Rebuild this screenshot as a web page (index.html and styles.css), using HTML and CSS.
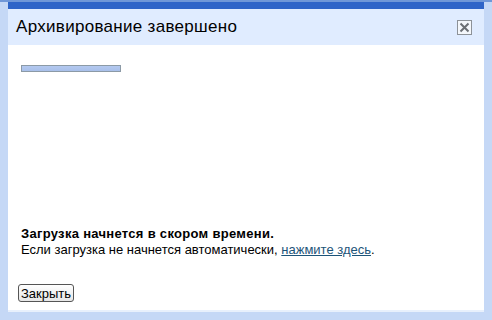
FILE: index.html
```html
<!DOCTYPE html>
<html lang="ru">
  <head>
    <meta charset="UTF-8" />
    <title>Архивирование завершено</title>
    <link rel="stylesheet" href="styles.css">
  </head>
  <body>
    <div class="page-strip"></div>
    <div class="frame">
      <div class="dialog">
        <div class="dialog-head">
          <h1>Архивирование завершено</h1>
          <span class="close-btn">
            <svg width="11" height="11" viewBox="0 0 11 11">
              <path d="M1.5 1.5 L9.5 9.5 M9.5 1.5 L1.5 9.5" stroke="#6b6f74" stroke-width="2" />
            </svg>
          </span>
        </div>
        <div class="dialog-body">
          <div class="progress"><div class="progress-fill"></div></div>
          <div class="message">
            <p class="msg-title">Загрузка начнется в скором времени.</p>
            <p>Если загрузка не начнется автоматически, <a href="#">нажмите здесь</a>.</p>
          </div>
          <button class="btn">Закрыть</button>
        </div>
      </div>
    </div>
  </body>
</html>
```

FILE: styles.css
```css
html,
body {
  margin: 0;
  height: 320px;
  overflow: hidden;
}

body {
  font-family: "Liberation Sans", Arial, sans-serif;
  background-color: #c5d8f6;
  color: #000;
}

.page-strip {
  height: 2px;
  background-color: #6f97d8;
}

.frame {
  padding: 0 8px 0 8px;
}

.dialog {
  width: 476px;
  height: 308px;
  background-color: #fff;
  border-top: 7px solid #2e64c8;
  box-sizing: border-box;
  display: flex;
  flex-direction: column;
  box-shadow: 0 2px 0 #e8f0fc;
}

.dialog-head {
  height: 36px;
  background-color: #e0ecff;
  display: flex;
  align-items: center;
  justify-content: space-between;
  padding: 0 12px 0 8px;
}

.dialog-head h1 {
  margin: 0;
  font-size: 17px;
  letter-spacing: 0.3px;
  font-weight: normal;
}

.close-btn {
  width: 13px;
  height: 13px;
  border: 1px solid #8d9298;
  background-color: #f4f7fb;
  display: flex;
  align-items: center;
  justify-content: center;
}

.dialog-body {
  flex: 1;
  padding: 20px 13px 8px 13px;
  display: flex;
  flex-direction: column;
  align-items: flex-start;
}

.progress {
  width: 98px;
  height: 5px;
  border: 1px solid #8c9aa6;
  background-color: #c6d6ee;
}

.progress-fill {
  height: 100%;
  background: linear-gradient(#b4c9f0, #a8c0ea);
}

.message {
  margin-top: auto;
  font-size: 13px;
  line-height: 16px;
}

.message p {
  margin: 0;
}

.msg-title {
  font-weight: bold;
  letter-spacing: 0.3px;
}

.message a {
  color: #1c5479;
}

.btn {
  margin-top: 26px;
  margin-left: -3px;
  font-family: "Liberation Sans", Arial, sans-serif;
  font-size: 13px;
  padding: 0 2px;
  height: 18px;
  background: linear-gradient(#ffffff, #e6e6e6);
  border: 1px solid #555;
  border-radius: 3px;
}
```
